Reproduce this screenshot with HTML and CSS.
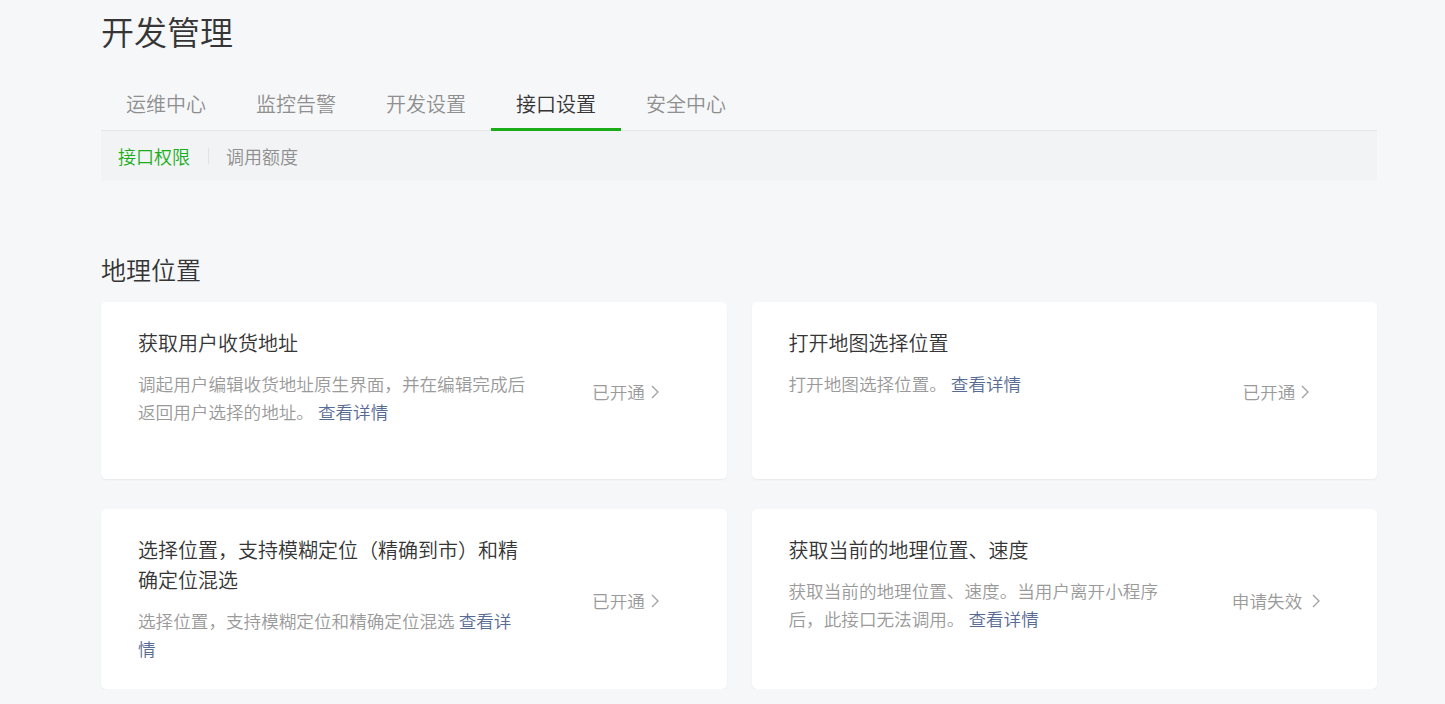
FILE: index.html
```html
<!DOCTYPE html>
<html lang="zh-CN">
<head>
<meta charset="utf-8">
<title>开发管理</title>
<link rel="stylesheet" href="styles.css">
</head>
<body>
<div class="page">
  <h1 class="page-title">开发管理</h1>
  <nav class="tabs">
    <a class="tab">运维中心</a>
    <a class="tab">监控告警</a>
    <a class="tab">开发设置</a>
    <a class="tab active">接口设置</a>
    <a class="tab">安全中心</a>
  </nav>
  <div class="subtabs">
    <a class="subtab active">接口权限</a>
    <span class="sep"></span>
    <a class="subtab">调用额度</a>
  </div>

  <h2 class="section-title">地理位置</h2>
  <div class="grid">
    <div class="card">
      <div class="info">
        <div class="card-title">获取用户收货地址</div>
        <div class="card-desc">调起用户编辑收货地址原生界面，并在编辑完成后返回用户选择的地址。 <a class="link">查看详情</a></div>
      </div>
      <div class="status">已开通<svg class="chev" viewBox="0 0 8 14" width="8" height="14"><polyline points="1,1 7,7 1,13" /></svg></div>
    </div>
    <div class="card">
      <div class="info">
        <div class="card-title">打开地图选择位置</div>
        <div class="card-desc">打开地图选择位置。 <a class="link">查看详情</a></div>
      </div>
      <div class="status">已开通<svg class="chev" viewBox="0 0 8 14" width="8" height="14"><polyline points="1,1 7,7 1,13" /></svg></div>
    </div>
    <div class="card">
      <div class="info">
        <div class="card-title">选择位置，支持模糊定位（精确到市）和精确定位混选</div>
        <div class="card-desc">选择位置，支持模糊定位和精确定位混选 <a class="link">查看详情</a></div>
      </div>
      <div class="status">已开通<svg class="chev" viewBox="0 0 8 14" width="8" height="14"><polyline points="1,1 7,7 1,13" /></svg></div>
    </div>
    <div class="card">
      <div class="info">
        <div class="card-title">获取当前的地理位置、速度</div>
        <div class="card-desc">获取当前的地理位置、速度。当用户离开小程序后，此接口无法调用。 <a class="link">查看详情</a></div>
      </div>
      <div class="status">申请失效 <svg class="chev" viewBox="0 0 8 14" width="8" height="14"><polyline points="1,1 7,7 1,13" /></svg></div>
    </div>
  </div>
</div>
</body>
</html>
```

FILE: styles.css
```css
* { box-sizing: border-box; }
html, body {
  margin: 0;
  padding: 0;
  background: #f6f7f9;
  font-family: "Noto Sans CJK SC", "Noto Sans", "Liberation Sans", sans-serif;
  font-weight: 350;
  color: #353535;
}
.page {
  width: 1276px;
  margin-left: 101px;
}
.page-title {
  margin: 9px 0 0;
  font-size: 33px;
  line-height: 44px;
  font-weight: 350;
  color: #353535;
}
.tabs {
  display: flex;
  margin-top: 37px;
  border-bottom: 1px solid #e5e6e8;
}
.tab {
  display: block;
  font-size: 20px;
  line-height: 28px;
  padding: 0 25px 10px;
  color: #8f8f8f;
  border-bottom: 3px solid transparent;
  margin-bottom: -1px;
}
.tab.active {
  color: #353535;
  border-bottom-color: #1aad19;
}
.subtabs {
  display: flex;
  align-items: center;
  height: 50px;
  padding-left: 17px;
  background: #f2f3f5;
}
.subtab {
  font-size: 18px;
  line-height: 24px;
  color: #8f8f8f;
}
.subtab.active { color: #1aad19; }
.sep {
  width: 1px;
  height: 16px;
  background: #e2e3e5;
  margin: 0 17px 0 18px;
}
.section-title {
  margin: 71px 0 16px;
  font-size: 25px;
  line-height: 34px;
  font-weight: 350;
  color: #353535;
}
.grid {
  display: grid;
  grid-template-columns: 1fr 1fr;
  column-gap: 25px;
  row-gap: 30px;
}
.card {
  display: flex;
  align-items: center;
  min-height: 177px;
  padding: 26px 0 26px 37px;
  background: #fff;
  border-radius: 5px;
  box-shadow: 0 1px 2px rgba(0, 0, 0, 0.06);
}
.info {
  width: 388px;
  align-self: flex-start;
}
.card-title {
  font-size: 20px;
  line-height: 30px;
  color: #353535;
}
.card-desc {
  margin-top: 12px;
  font-size: 17.6px;
  line-height: 28px;
  color: #9a9a9a;
}
.link { color: #576b95; }
.status {
  margin-left: auto;
  margin-right: 36px;
  width: 130px;
  text-align: center;
  font-size: 17.6px;
  line-height: 28px;
  color: #9a9a9a;
  white-space: nowrap;
  padding-top: 3px;
}
.chev {
  margin-left: 6px;
  vertical-align: 0px;
  fill: none;
  stroke: #a0a0a0;
  stroke-width: 1.3;
}
```
